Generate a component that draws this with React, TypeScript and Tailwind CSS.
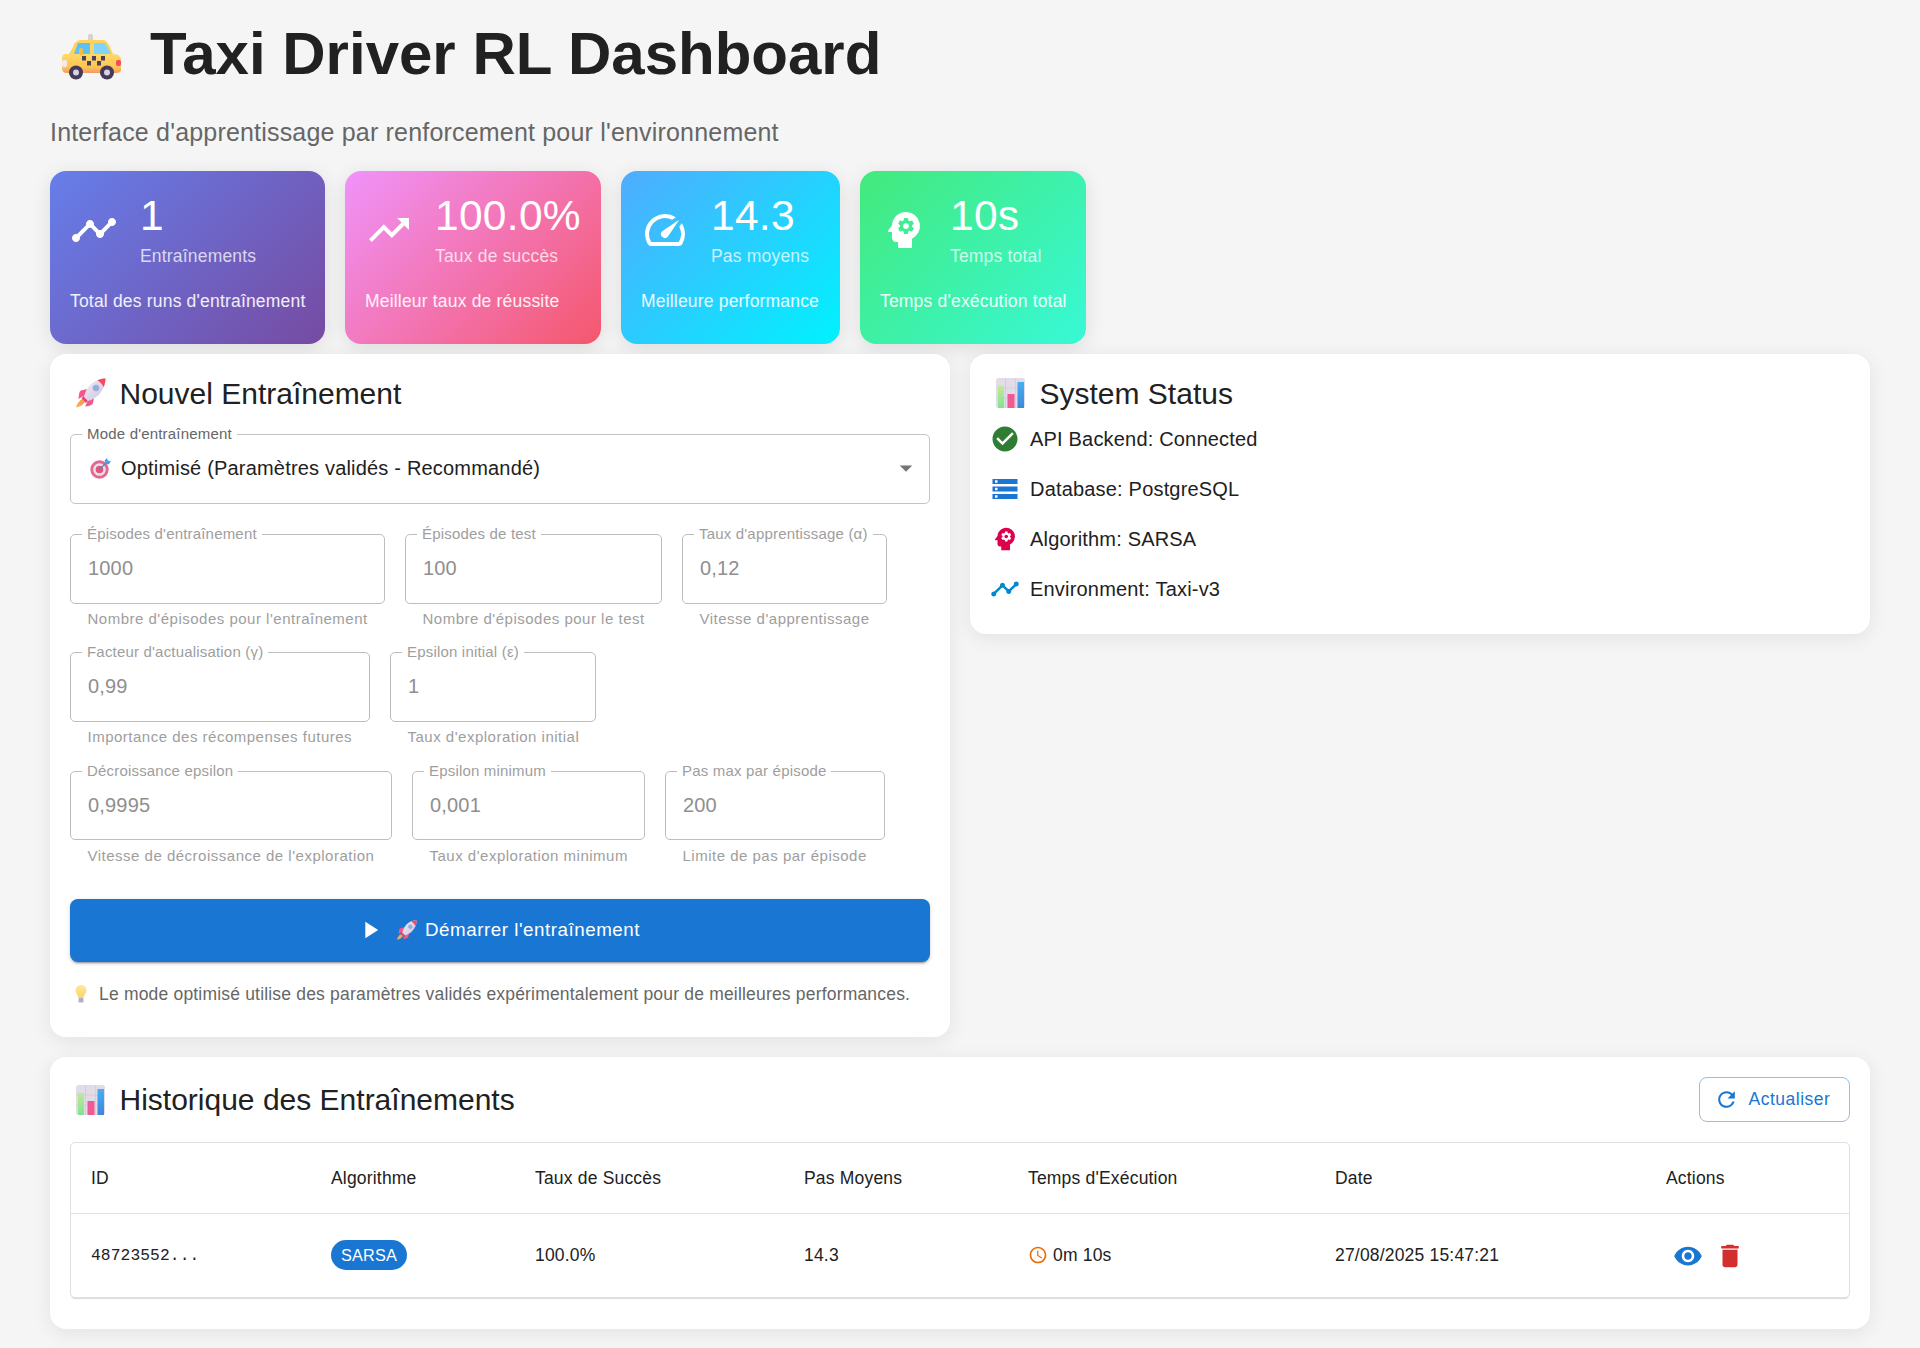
import React from "react";
import {
  MdTimeline, MdTrendingUp, MdSpeed, MdPsychology, MdCheckCircle, MdStorage,
  MdPlayArrow, MdRefresh, MdVisibility, MdDelete, MdAccessTime, MdArrowDropDown,
} from "react-icons/md";

const Taxi = () => (
  <svg viewBox="0 0 60 46" className="w-[60px] h-[46px] block">
    <defs>
      <linearGradient id="tb" x1="0" y1="0" x2="0" y2="1">
        <stop offset="0" stopColor="#ffd966" /><stop offset="0.7" stopColor="#fdc454" /><stop offset="1" stopColor="#f09a6a" />
      </linearGradient>
    </defs>
    <rect x="27" y="0" width="5" height="7" rx="1.5" fill="#d8d2cc" />
    <path d="M12 13 Q14 6 20 6 H42 Q46 6 49 13 L52 20 H8 Z" fill="#fdd35e" />
    <path d="M13 20 L17 9 H29 V20 Z" fill="#5cc2f5" />
    <path d="M33 20 V9 H44 L50 20 Z" fill="#7ed4fb" />
    <path d="M4 20 H52 Q60 20 60 26 V36 Q60 39 55 39 H6 Q1 39 1 34 V26 Q1 20 4 20 Z" fill="url(#tb)" />
    <rect x="18" y="14" width="4" height="7" rx="2" fill="#f8bb3a" />
    <rect x="1" y="26" width="5" height="7" rx="2" fill="#f6e9ee" />
    <rect x="55" y="26" width="5" height="6" rx="2" fill="#f8475e" />
    {[[22, 22], [32, 22], [41, 22], [27, 27], [37, 27]].map(([x, y], i) => (
      <rect key={i} x={x - 1} y={y} width="4" height="4.5" fill="#4a3f5c" />
    ))}
    {[15, 46].map((x) => (
      <g key={x}>
        <circle cx={x} cy="38.5" r="7" fill="#453a56" />
        <circle cx={x} cy="38.5" r="3" fill="#d8d0e8" />
      </g>
    ))}
  </svg>
);

const Rocket = ({ size }: { size: string }) => (
  <svg viewBox="0 0 30 30" className={`${size} block shrink-0`}>
    <defs>
      <linearGradient id="rb" x1="0" y1="0" x2="1" y2="1"><stop offset="0" stopColor="#f1ecf5" /><stop offset="1" stopColor="#cfc3dc" /></linearGradient>
      <linearGradient id="rf" x1="1" y1="0" x2="0" y2="1"><stop offset="0" stopColor="#f59a3e" /><stop offset="1" stopColor="#f7b267" /></linearGradient>
    </defs>
    <path d="M6 21 L9 24 C7 27 4 29 0 29.5 C0.5 26 3 23 6 21 Z" fill="url(#rf)" />
    <path d="M11 11 L5 12.5 C3.5 13 3 15 2.5 21 L9 17 Z" fill="#f5568c" />
    <path d="M18 20 L17 25 C16.5 27 14 28 9 28.5 L12.5 21.5 Z" fill="#f5568c" />
    <path d="M8 17.5 L12.5 22 L10 25 L5.5 20.5 Z" fill="#ec3f7c" />
    <path d="M29.5 0.5 C24 0.5 17 3 12.5 9 C10 12.5 8.5 16 8 19 L12 23 C15 22.5 19 20 22 17.5 C27 13 29.5 6 29.5 0.5 Z" fill="url(#rb)" />
    <path d="M29.5 0.5 C27 0.5 24 1 21.5 2.3 C23.5 3.5 26.5 6.5 27.7 9 C29 6 29.5 3 29.5 0.5 Z" fill="#f5475f" />
    <circle cx="20" cy="10" r="3" fill="#7fb4f0" stroke="#b9a9cc" strokeWidth="1" />
  </svg>
);

const Chart = () => (
  <svg viewBox="0 0 30 30" className="w-[30px] h-[30px] block shrink-0">
    <defs>
      <linearGradient id="cg" x1="0" y1="0" x2="0" y2="1"><stop offset="0" stopColor="#c4e89a" /><stop offset="1" stopColor="#7fe58f" /></linearGradient>
      <linearGradient id="cb" x1="0" y1="0" x2="0" y2="1"><stop offset="0" stopColor="#45b0f5" /><stop offset="1" stopColor="#3f86d8" /></linearGradient>
    </defs>
    <rect x="0" y="0" width="29" height="30" rx="2.5" fill="#e2dce8" />
    <path d="M0 10 H29 M0 20 H29 M9.5 0 V30 M19.5 0 V30" stroke="#cfc9d8" strokeWidth="0.7" />
    <rect x="2" y="8" width="6" height="22" fill="url(#cg)" />
    <rect x="11.5" y="16" width="7" height="14" fill="#ef5a92" />
    <rect x="21.5" y="4" width="6.5" height="26" fill="url(#cb)" />
  </svg>
);

const Target = () => (
  <svg viewBox="0 0 21 21" className="w-[21px] h-[21px] block shrink-0">
    <circle cx="9.5" cy="11.5" r="9.2" fill="#e2688f" />
    <circle cx="9.5" cy="11.5" r="6.3" fill="#ecdfe9" />
    <circle cx="9.5" cy="11.5" r="3.8" fill="#e2557f" />
    <path d="M9.5 11.5 L17 4" stroke="#6b7ea8" strokeWidth="1.3" />
    <path d="M14.5 2.5 L17 0 L17.8 2.6 L21 3.4 L18.5 6.5 L15.5 5.8 Z" fill="#3fa2ec" />
  </svg>
);

const Bulb = () => (
  <svg viewBox="0 0 14 18" className="w-[14px] h-[18px] block shrink-0">
    <defs>
      <linearGradient id="bl" x1="0" y1="0" x2="0" y2="1"><stop offset="0" stopColor="#fdeaa0" /><stop offset="1" stopColor="#f7d568" /></linearGradient>
    </defs>
    <path d="M7 0 C10.5 0 12.5 2.5 12.5 5.5 C12.5 8.5 10 9.5 9.5 13 H4.5 C4 9.5 1.5 8.5 1.5 5.5 C1.5 2.5 3.5 0 7 0 Z" fill="url(#bl)" />
    <rect x="4.5" y="13" width="5" height="4.5" rx="1" fill="#b9abc6" />
  </svg>
);

const stats = [
  { w: "w-[275px]", g: "bg-[linear-gradient(135deg,#667eea_0%,#764ba2_100%)]", Icon: MdTimeline, v: "1", l: "Entraînements", c: "Total des runs d'entraînement" },
  { w: "w-[256px]", g: "bg-[linear-gradient(135deg,#f093fb_0%,#f5576c_100%)]", Icon: MdTrendingUp, v: "100.0%", l: "Taux de succès", c: "Meilleur taux de réussite" },
  { w: "w-[219px]", g: "bg-[linear-gradient(135deg,#4facfe_0%,#00f2fe_100%)]", Icon: MdSpeed, v: "14.3", l: "Pas moyens", c: "Meilleure performance" },
  { w: "w-[226px]", g: "bg-[linear-gradient(135deg,#43e97b_0%,#38f9d7_100%)]", Icon: MdPsychology, v: "10s", l: "Temps total", c: "Temps d'exécution total" },
];

const fields = [
  { w: "w-[315px]", l: "Épisodes d'entraînement", v: "1000", h: "Nombre d'épisodes pour l'entraînement" },
  { w: "w-[257px]", l: "Épisodes de test", v: "100", h: "Nombre d'épisodes pour le test" },
  { w: "w-[205px]", l: "Taux d'apprentissage (α)", v: "0,12", h: "Vitesse d'apprentissage" },
  { w: "w-[300px]", l: "Facteur d'actualisation (γ)", v: "0,99", h: "Importance des récompenses futures" },
  { w: "w-[206px]", l: "Epsilon initial (ε)", v: "1", h: "Taux d'exploration initial" },
  { w: "w-[322px]", l: "Décroissance epsilon", v: "0,9995", h: "Vitesse de décroissance de l'exploration" },
  { w: "w-[233px]", l: "Epsilon minimum", v: "0,001", h: "Taux d'exploration minimum" },
  { w: "w-[220px]", l: "Pas max par épisode", v: "200", h: "Limite de pas par épisode" },
];

const cols = [
  { w: "w-[240px]", t: "ID" },
  { w: "w-[204px]", t: "Algorithme" },
  { w: "w-[269px]", t: "Taux de Succès" },
  { w: "w-[224px]", t: "Pas Moyens" },
  { w: "w-[307px]", t: "Temps d'Exécution" },
  { w: "w-[331px]", t: "Date" },
  { w: "w-[203px]", t: "Actions" },
];

const Heading = ({ icon, nudge, children }: { icon: React.ReactNode; nudge?: boolean; children: React.ReactNode }) => (
  <div className="flex items-center h-[38px]">
    <div className="ml-[6px] mr-[13.5px]">{icon}</div>
    <h2 className={`text-[30px] leading-[38px] font-normal text-[#212121] ${nudge ? "mt-[1px]" : ""}`}>{children}</h2>
  </div>
);

const Status = ({ icon, text }: { icon: React.ReactNode; text: string }) => (
  <div className="flex items-center h-[50px] gap-[10px]">
    <div className="w-[30px] h-[30px] flex items-center justify-center">{icon}</div>
    <span className="text-[20px] tracking-[0.1875px] text-[#212121]">{text}</span>
  </div>
);

export default function App() {
  return (
    <div className="min-h-[1348px] bg-[#f5f5f5] px-[50px] pt-[20px] font-['Liberation_Sans',Arial,sans-serif] text-[#212121]">
      <div className="flex items-center h-[68px]">
        <div className="ml-[11px] mr-[29px] mt-[6px]"><Taxi /></div>
        <h1 className="text-[60px] leading-[68px] font-bold text-[#212121]">Taxi Driver RL Dashboard</h1>
      </div>
      <p className="mt-[28.5px] mb-[24.5px] text-[25px] tracking-[0.1875px] leading-[30px] text-[#666666]">Interface d'apprentissage par renforcement pour l'environnement</p>

      <div className="flex gap-5">
        {stats.map((s) => (
          <div key={s.l} className={`${s.w} h-[173px] rounded-2xl ${s.g} p-5 text-white shadow-[0_4px_20px_rgba(0,0,0,0.1)]`}>
            <div className="flex items-center h-[78px]">
              <s.Icon className="w-[48px] h-[48px] shrink-0 mr-[22px]" />
              <div>
                <div className="text-[42.5px] tracking-[0.3px] leading-[50px]">{s.v}</div>
                <div className="text-[17.5px] tracking-[0.1875px] leading-[26px] mt-[2px] text-white/75">{s.l}</div>
              </div>
            </div>
            <div className="text-[17.5px] tracking-[0.1875px] leading-[26px] mt-[19px] whitespace-nowrap text-white/90">{s.c}</div>
          </div>
        ))}
      </div>

      <div className="flex gap-5 mt-[10px] items-start">
        <section className="w-[900px] h-[683px] bg-white rounded-2xl p-5 shadow-[0_4px_20px_rgba(0,0,0,0.08)]">
          <Heading nudge icon={<Rocket size="w-[30px] h-[30px]" />}>Nouvel Entraînement</Heading>

          <div className="relative mt-[22px] h-[70px] border border-[#c4c4c4] rounded-[5px] flex items-center pl-[19px] pr-[8px] pb-[2px]">
            <span className="absolute left-[11px] top-[-10px] px-[5px] bg-white text-[15px] tracking-[0.1875px] leading-[18px] text-[#666666]">Mode d'entraînement</span>
            <Target />
            <span className="ml-[10px] text-[20px] tracking-[0.1875px] text-[#212121]">Optimisé (Paramètres validés - Recommandé)</span>
            <MdArrowDropDown className="ml-auto w-[30px] h-[30px] text-[#757575]" />
          </div>

          <div className="flex flex-wrap gap-x-5 gap-y-[25.9px] mt-[30px]">
            {fields.map((f) => (
              <div key={f.l} className={f.w}>
                <div className="relative h-[69.5px] border border-[#bdbdbd] rounded-[5px] flex items-center pl-[17px] pb-[2px]">
                  <span className="absolute left-[11px] top-[-10px] px-[5px] bg-white text-[15px] tracking-[0.1875px] leading-[18px] whitespace-nowrap text-[#9e9e9e]">{f.l}</span>
                  <span className="text-[20px] tracking-[0.1875px] text-[#8f8f8f]">{f.v}</span>
                </div>
                <div className="h-[23px] pt-[5.4px] px-[17.5px] text-[15px] leading-[20px] tracking-[0.5px] whitespace-nowrap text-[#9e9e9e]">{f.h}</div>
              </div>
            ))}
          </div>

          <button className="w-full h-[62.5px] mt-[35.8px] pr-[4px] rounded-[8px] bg-[#1976d2] text-white text-[18.75px] tracking-[0.536px] font-medium flex items-center justify-center shadow-[0_3px_1px_-2px_rgba(0,0,0,0.2),0_2px_2px_rgba(0,0,0,0.14),0_1px_5px_rgba(0,0,0,0.12)]">
            <MdPlayArrow className="w-[28px] h-[28px] mr-[13px]" />
            <span className="mr-[8px]"><Rocket size="w-[20px] h-[20px]" /></span>
            Démarrer l'entraînement
          </button>

          <div className="flex items-center mt-[19px]">
            <span className="ml-[4px] mr-[11px]"><Bulb /></span>
            <span className="text-[17.5px] tracking-[0.1875px] text-[#666666] whitespace-nowrap">Le mode optimisé utilise des paramètres validés expérimentalement pour de meilleures performances.</span>
          </div>
        </section>

        <section className="w-[900px] h-[280px] bg-white rounded-2xl p-5 shadow-[0_4px_20px_rgba(0,0,0,0.08)]">
          <Heading nudge icon={<Chart />}>System Status</Heading>
          <div className="mt-[2px]">
            <Status icon={<MdCheckCircle className="w-[30px] h-[30px] text-[#2e7d32]" />} text="API Backend: Connected" />
            <Status icon={<MdStorage className="w-[30px] h-[30px] text-[#1976d2]" />} text="Database: PostgreSQL" />
            <Status icon={<MdPsychology className="w-[30px] h-[30px] text-[#dc004e]" />} text="Algorithm: SARSA" />
            <Status icon={<MdTimeline className="w-[30px] h-[30px] text-[#0288d1]" />} text="Environment: Taxi-v3" />
          </div>
        </section>
      </div>

      <section className="mt-[20px] h-[272px] bg-white rounded-2xl p-5 shadow-[0_4px_20px_rgba(0,0,0,0.08)]">
        <div className="flex items-center justify-between h-[45px]">
          <Heading icon={<Chart />}>Historique des Entraînements</Heading>
          <button className="w-[151px] h-[45px] pr-[5px] rounded-[8px] border border-[#90bfe9] text-[#1976d2] text-[17.5px] tracking-[0.5px] font-medium flex items-center justify-center">
            <MdRefresh className="w-[25px] h-[25px] mr-[10px]" />
            Actualiser
          </button>
        </div>
        <div className="mt-[20px] border border-[#e0e0e0] rounded-[5px] h-[156px] shadow-[0_2px_1px_-1px_rgba(0,0,0,0.15)]">
          <table className="w-full table-fixed text-[17.5px] tracking-[0.1875px] text-[#212121]">
            <thead>
              <tr className="h-[70px] border-b border-[#e0e0e0]">
                {cols.map((c) => (
                  <th key={c.t} className={`${c.w} px-5 text-left font-medium`}>{c.t}</th>
                ))}
              </tr>
            </thead>
            <tbody>
              <tr className="h-[84px]">
                <td className="px-5 pt-[2px] font-['Liberation_Mono',monospace] text-[16.25px] tracking-[0.1px]">48723552...</td>
                <td className="px-5">
                  <span className="inline-flex items-center h-[30px] px-[10px] rounded-full bg-[#1976d2] text-white text-[16.25px]">SARSA</span>
                </td>
                <td className="px-5">100.0%</td>
                <td className="px-5">14.3</td>
                <td className="px-5">
                  <span className="flex items-center gap-[5px]">
                    <MdAccessTime className="w-[20px] h-[20px] text-[#ed6c02]" />0m 10s
                  </span>
                </td>
                <td className="px-5">27/08/2025 15:47:21</td>
                <td className="px-5">
                  <span className="flex items-center gap-[12px] ml-[7px] mt-[1px]">
                    <MdVisibility className="w-[30px] h-[30px] text-[#1976d2]" />
                    <MdDelete className="w-[30px] h-[30px] text-[#d32f2f]" />
                  </span>
                </td>
              </tr>
            </tbody>
          </table>
        </div>
      </section>
    </div>
  );
}
